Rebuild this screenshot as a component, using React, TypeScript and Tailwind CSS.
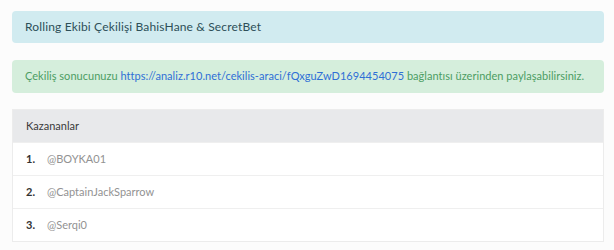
import React from 'react';

const winners = ['@BOYKA01', '@CaptainJackSparrow', '@Serqi0'];

const App = () => {
  return (
    <div className="min-h-[250px] w-[614px] bg-[#fcfcfc] px-3 pt-[11px] font-['Lato',sans-serif] text-[11px]">
      {/* Title */}
      <div className="flex h-8 w-[592px] items-center rounded-sm bg-[#d1ebf0] px-[13px] text-[12px] tracking-[0.15px] text-[#2d4f58]">
        Rolling Ekibi Çekilişi BahisHane &amp; SecretBet
      </div>

      {/* Share info */}
      <div className="mt-[17px] flex h-[33px] w-[592px] items-center rounded-sm bg-[#d5eedc] px-[13px] tracking-[0.03px] text-[#4c9d63]">
        <span>
          Çekiliş sonucunuzu{' '}
          <a href="#" className="text-[#2f6fd6]">
            https://analiz.r10.net/cekilis-araci/fQxguZwD1694454075
          </a>{' '}
          bağlantısı üzerinden paylaşabilirsiniz.
        </span>
      </div>

      {/* Winners */}
      <div className="mt-4 w-[592px] border border-[#ececec] bg-white">
        <div className="flex h-[32px] items-center bg-[#e8e9eb] px-[13px] text-[#3a3a3a]">Kazananlar</div>
        {winners.map((name, i) => (
          <div
            key={name}
            className="flex h-[33px] items-center border-t border-[#efefef] px-[13px]"
          >
            <span className="w-[21px] font-bold text-[#333]">{i + 1}.</span>
            <span className="text-[#929292]">{name}</span>
          </div>
        ))}
      </div>
    </div>
  );
};

export default App;
